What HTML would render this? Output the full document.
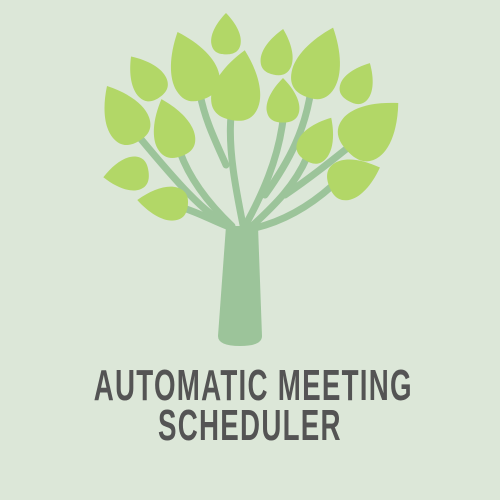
<!DOCTYPE html>
<html><head><meta charset="utf-8"><style>
html,body{margin:0;padding:0;background:#dce7d8;}
.wrap{position:relative;width:500px;height:500px;overflow:hidden;background:#dce7d8;}
svg{position:absolute;left:0;top:0;}
.t{position:absolute;left:0;width:500px;text-align:center;font-family:"Liberation Sans",sans-serif;font-weight:bold;color:#545454;font-size:44px;letter-spacing:2px;line-height:1;white-space:nowrap;}
.t span{display:inline-block;transform:scaleX(0.63);transform-origin:center;}
</style></head><body><div class="wrap">
<svg width="500" height="500" viewBox="0 0 500 500">
<defs>
<g id="lf">
<path d="M0,-1 C0.38,-0.72 0.58,-0.42 0.52,-0.2 C0.46,0.02 0.22,0.06 0,0.06 C-0.22,0.06 -0.46,0.02 -0.52,-0.2 C-0.58,-0.42 -0.38,-0.72 0,-1Z" fill="#b2d767"/>
</g>
</defs>
<g fill="none" stroke="#9cc49a" stroke-width="7" stroke-linecap="round">
<path d="M243,225 C236,190 228,150 231,116"/>
<path d="M226,165 C215,140 205,120 200,94"/>
<path d="M230,226 C205,215 175,180 140,138"/>
<path d="M232,226 C210,205 190,180 180,152"/>
<path d="M232,228 C215,222 200,213 183,208"/>
<path d="M245,226 C262,195 278,160 283,120"/>
<path d="M265,195 C290,160 305,130 311,90"/>
<path d="M252,226 C275,205 295,185 307,157"/>
<path d="M285,195 C310,178 330,162 350,146"/>
<path d="M255,228 C280,222 305,210 332,186"/>
</g>
<path d="M226,226 L258,226 L262,336 Q262,346 240,346 Q218,346 218,336Z" fill="#9cc49a"/>
<use href="#lf" transform="translate(226,52) rotate(0) scale(28,39)"/>
<use href="#lf" transform="translate(203,95) rotate(-22) scale(44,68)"/>
<use href="#lf" transform="translate(232,116) rotate(11) scale(46,67)"/>
<use href="#lf" transform="translate(274,72) rotate(12) scale(30,44)"/>
<use href="#lf" transform="translate(308,93) rotate(21) scale(44,70)"/>
<use href="#lf" transform="translate(350,99) rotate(29) scale(30,41)"/>
<use href="#lf" transform="translate(158,95) rotate(-35) scale(32,47)"/>
<use href="#lf" transform="translate(137,138) rotate(-30) scale(40,60)"/>
<use href="#lf" transform="translate(180,153) rotate(-19) scale(38,57)"/>
<use href="#lf" transform="translate(283,120) rotate(0) scale(31,42)"/>
<use href="#lf" transform="translate(307,158) rotate(31) scale(32,47)"/>
<use href="#lf" transform="translate(350,148) rotate(47) scale(50,66)"/>
<use href="#lf" transform="translate(146,172) rotate(-97) scale(32,43)"/>
<use href="#lf" transform="translate(185,205) rotate(-84) scale(32,48)"/>
<use href="#lf" transform="translate(332,185) rotate(70) scale(38,51)"/>
</svg>
<div class="t" style="top:364px"><span>AUTOMATIC MEETING</span></div>
<div class="t" style="top:404px"><span>SCHEDULER</span></div>
</div></body></html>
